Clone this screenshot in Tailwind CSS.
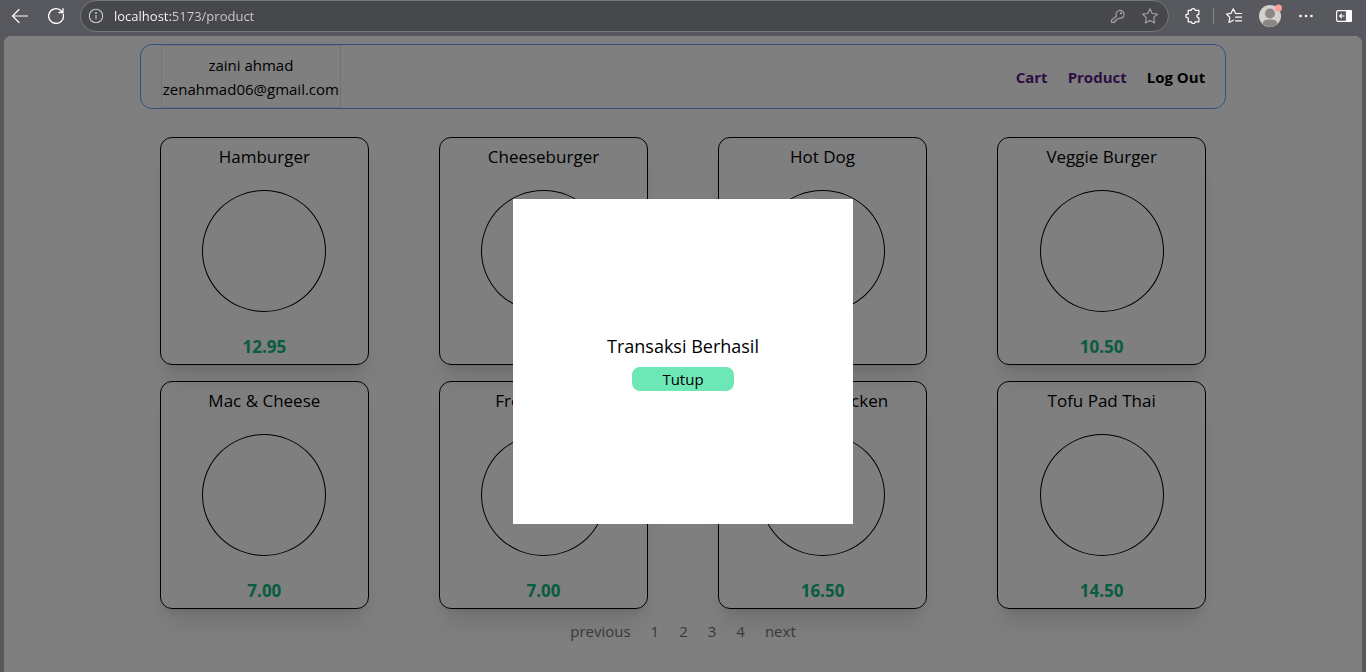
<!DOCTYPE html>
<html lang="id">
<head>
<meta charset="utf-8">
<title>Product</title>
<script src="https://cdn.jsdelivr.net/npm/@tailwindcss/browser@4"></script>
</head>
<body class="flex h-screen flex-col overflow-hidden bg-[#58595e] font-['Segoe_UI','Open_Sans',sans-serif] text-black">
<header class="flex h-9 shrink-0 items-start text-white">
  <div class="flex h-8 w-20 shrink-0 items-center gap-5 pl-3">
    <button aria-label="Back"><svg class="h-4 w-4" viewBox="0 0 16 16" fill="none" stroke="currentColor" stroke-width="1.2" stroke-linecap="round" stroke-linejoin="round"><path d="M15.5 8H.7M7 1.5.6 8 7 14.5"/></svg></button>
    <button aria-label="Reload"><svg class="h-4 w-4" viewBox="0 0 16 16" fill="none" stroke="currentColor" stroke-width="1.3" stroke-linecap="round" stroke-linejoin="round"><path d="M15.2 6.1A7.4 7.4 0 1 1 12 1.8l2.8 2.5M15 .7v3.8h-4"/></svg></button>
  </div>
  <div class="flex h-8 min-w-0 flex-1 items-center rounded-full border border-[#77787c] bg-[#47484c] pr-2.5 pl-[7px]">
    <button aria-label="Site information" class="text-[#c5c6c8]"><svg class="h-4 w-4" viewBox="0 0 16 16" fill="none" stroke="currentColor" stroke-width="1.1"><circle cx="8" cy="8" r="6.7"/><path d="M8 7v4.3"/><circle cx="8" cy="5" r=".45" fill="currentColor"/></svg></button>
    <input aria-label="Address" value="localhost:5173/product" class="ml-2.5 min-w-0 flex-1 bg-[linear-gradient(to_right,#ffffff_58px,#d0d0d2_58px)] bg-clip-text text-[13px] leading-5 text-transparent outline-none">
    <div class="flex items-center gap-4 text-[#a4a5a8]">
      <button aria-label="Passwords"><svg class="h-4 w-4" viewBox="0 0 16 16" fill="none" stroke="currentColor" stroke-width="1.1" stroke-linejoin="round"><path d="M6.5 8.2A4 4 0 1 1 9 10.2L7.7 11.3H6.2v1.5H4.7v1.6H1.6v-2.5L6.6 8z"/><circle cx="11" cy="5.3" r=".6"/></svg></button>
      <button aria-label="Favorite"><svg class="h-4 w-4" viewBox="0 0 16 16" fill="none" stroke="currentColor" stroke-width="1.1" stroke-linejoin="round"><path d="m8 .8 2.2 4.7 5.2.6-3.8 3.6 1 5.2L8 12.4l-4.6 2.5 1-5.2L.6 6.1l5.2-.6z"/></svg></button>
    </div>
  </div>
  <div class="flex h-8 w-[197px] shrink-0 items-center gap-4 pr-3.5 pl-4">
    <div class="flex items-center gap-3">
      <button aria-label="Extensions"><svg class="h-4 w-4" viewBox="0 0 16 16" fill="none" stroke="currentColor" stroke-width="1.2" stroke-linejoin="round"><path d="M3.2 2.3h3C6.2.8 7.2.6 8.200.6s1.900.4 1.900 1.700h3.800v4c-1.400 0-2 .7-2 1.700s.6 1.800 2 1.800v4h-3.800c0 1.200-.8 1.700-1.900 1.700s-1.900-.5-1.900-1.700H3.200v-4C1.500 9.800.8 9.200.8 8s.8-1.800 2.400-1.800z"/></svg></button>
      <span class="h-4 w-px bg-[#85868a]"></span>
      <button aria-label="Favorites"><svg class="h-4 w-4" viewBox="0 0 16 16" fill="none" stroke="currentColor" stroke-width="1.2" stroke-linejoin="round" stroke-linecap="round"><path d="M15.500 5.500H9.700L7.200.9 5 5.300l-4.500.7L3.800 9.400l-.8 5.100 4.300-2.300M9.500 9.200h6M9.500 12.800h6"/></svg></button>
    </div>
    <button aria-label="Profile"><svg class="h-6 w-6" viewBox="0 0 24 24"><circle cx="12" cy="12" r="11" fill="#d3d1cd"/><circle cx="12" cy="9.500" r="5" fill="#8b8883"/><path d="M4.500 20c.5-3.800 3-4.500 7.500-4.500s7 .7 7.500 4.500a11 11 0 0 1-15 0z" fill="#8b8883"/><circle cx="20.500" cy="4" r="3.500" fill="#ff9d97"/></svg></button>
    <button aria-label="Settings and more"><svg class="h-4 w-4" viewBox="0 0 16 16" fill="currentColor"><circle cx="2.500" cy="8" r="1.300"/><circle cx="8" cy="8" r="1.300"/><circle cx="13.500" cy="8" r="1.300"/></svg></button>
    <button aria-label="Sidebar" class="ml-auto"><svg class="h-4 w-4" viewBox="0 0 16 16" fill="none" stroke="currentColor" stroke-width="1.200"><rect x=".6" y="2.600" width="14.800" height="10.800" rx="1.400"/><path d="M10.500 2.600h4q1 0 1 1v8.800q0 1-1 1h-4z" fill="currentColor"/><path d="M8.500 8H3.700M5.800 5.900 3.700 8l2.100 2.100"/></svg></button>
  </div>
</header>

<div class="relative mx-1 min-h-0 flex-1 overflow-hidden rounded-t-lg bg-white">
  <div class="mx-auto w-4/5 pt-2">
    <nav class="flex items-center justify-between rounded-xl border border-[#60a5fa] px-5 text-[15px]">
      <div class="border border-[#e5e7eb] px-px pt-[7px] pb-1.5 text-center leading-6">
        <p>zaini ahmad</p>
        <p>zenahmad06@gmail.com</p>
      </div>
      <div class="flex gap-5 font-bold leading-6">
        <a href="#cart" class="text-[#581c87]">Cart</a>
        <a href="#product" class="text-[#581c87]">Product</a>
        <button>Log Out</button>
      </div>
    </nav>
    <main class="mt-7 grid grid-cols-4 gap-x-[70px] gap-y-4 px-5 text-center text-[17px] leading-7" id="products"></main>
    <nav aria-label="Pagination" class="mt-2.5 flex justify-center gap-5 text-[15px] leading-6 text-[#6b7280]">
      <button>previous</button><button>1</button><button>2</button><button>3</button><button>4</button><button>next</button>
    </nav>
  </div>
  <div class="absolute inset-x-0 top-0 flex h-[calc(100%+15px)] items-center justify-center bg-black/50">
    <div role="dialog" aria-labelledby="status" class="flex h-1/2 w-1/4 flex-col items-center justify-center bg-white pb-px">
      <p id="status" class="text-lg leading-7">Transaksi Berhasil</p>
      <button class="mt-[7px] w-[30%] rounded-lg bg-[#6ee7b7] text-[15px] leading-6">Tutup</button>
    </div>
  </div>
</div>
<template id="card">
  <article class="flex flex-col items-center rounded-xl border border-black pt-[5px] pb-[3px] shadow-xl">
    <h2 class="mb-[19px]"></h2>
    <div class="h-[122px] w-3/5 rounded-[50%] border border-black"></div>
    <p class="mt-[21px] font-bold text-[#10b981]"></p>
  </article>
</template>
<script>
const products = [["Hamburger","12.95"],["Cheeseburger","9.50"],["Hot Dog","8.00"],["Veggie Burger","10.50"],["Mac & Cheese","7.00"],["French Fries","7.00"],["Roasted Chicken","16.50"],["Tofu Pad Thai","14.50"]];
const card = document.getElementById("card");
for (const [name, price] of products) {
  const item = card.content.cloneNode(true);
  item.querySelector("h2").textContent = name;
  item.querySelector("p").textContent = price;
  document.getElementById("products").append(item);
}
</script>
</body>
</html>
